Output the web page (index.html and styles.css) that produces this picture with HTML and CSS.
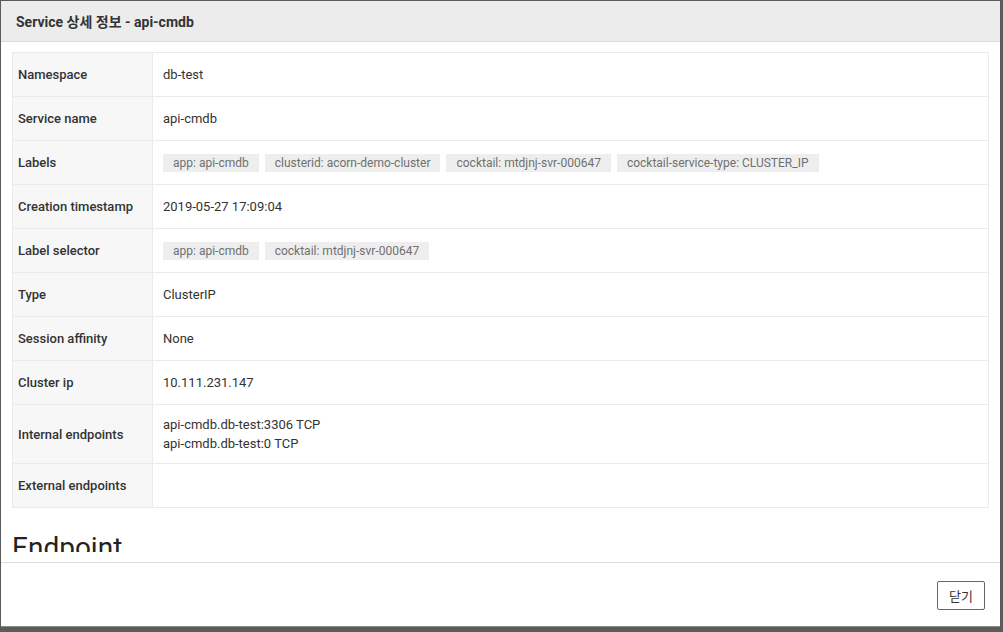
FILE: index.html
```html
<!DOCTYPE html>
<html lang="ko">
<head>
<meta charset="utf-8">
<title>Service 상세 정보</title>
<link rel="stylesheet" href="styles.css">
</head>
<body>
<div class="backdrop">
  <div class="modal">
    <div class="modal-header">Service 상세 정보 - api-cmdb</div>
    <div class="modal-body">
      <div class="scroll">
        <table class="detail">
          <tr><th>Namespace</th><td>db-test</td></tr>
          <tr><th>Service name</th><td>api-cmdb</td></tr>
          <tr><th>Labels</th><td>
            <span class="tag">app: api-cmdb</span><span class="tag">clusterid: acorn-demo-cluster</span><span class="tag">cocktail: mtdjnj-svr-000647</span><span class="tag">cocktail-service-type: CLUSTER_IP</span>
          </td></tr>
          <tr><th>Creation timestamp</th><td>2019-05-27 17:09:04</td></tr>
          <tr><th>Label selector</th><td>
            <span class="tag">app: api-cmdb</span><span class="tag">cocktail: mtdjnj-svr-000647</span>
          </td></tr>
          <tr><th>Type</th><td>ClusterIP</td></tr>
          <tr><th>Session affinity</th><td>None</td></tr>
          <tr><th>Cluster ip</th><td>10.111.231.147</td></tr>
          <tr><th>Internal endpoints</th><td>api-cmdb.db-test:3306 TCP<br>api-cmdb.db-test:0 TCP</td></tr>
          <tr><th>External endpoints</th><td></td></tr>
        </table>
        <h2 class="section-title">Endpoint</h2>
      </div>
    </div>
    <div class="modal-footer">
      <button class="btn">닫기</button>
    </div>
  </div>
</div>
</body>
</html>
```
FILE: styles.css
```css
html, body {
  margin: 0;
  padding: 0;
}
body {
  background: #5b5b5b;
  font-family: Roboto, "Noto Sans CJK KR", sans-serif;
  color: #333;
  font-size: 13px;
}
.backdrop {
  width: 1003px;
  height: 632px;
  padding: 1px 0 0 1px;
  box-sizing: border-box;
}
.modal {
  width: 999px;
  height: 625px;
  background: #fff;
  display: flex;
  flex-direction: column;
  box-shadow: 0 1px 0 #8a8a8a;
}
.modal-header {
  height: 40px;
  flex: none;
  background: #ececec;
  border-bottom: 1px solid #dcdcdc;
  padding: 0 15px;
  display: flex;
  align-items: center;
  font-weight: 700;
  font-size: 14px;
  color: #333;
}
.modal-body {
  flex: none;
  padding: 10px 11px;
  box-sizing: border-box;
  height: 520px;
}
.scroll {
  height: 500px;
  overflow: hidden;
}
.detail {
  width: 977px;
  border-collapse: collapse;
  border: 1px solid #ebebeb;
}
.detail tr {
  height: 44px;
}
.detail th,
.detail td {
  border: 1px solid #ebebeb;
  padding: 10px 10px;
  line-height: 19px;
  vertical-align: middle;
  text-align: left;
}
.detail th {
  width: 124px;
  background: #f7f7f7;
  font-weight: 500;
  padding-left: 5px;
  color: #333;
}
.detail td {
  color: #333;
}
.tag {
  display: inline-block;
  background: #eeeeee;
  color: #707070;
  font-size: 12px;
  line-height: 18px;
  padding: 0 10px;
  margin-right: 6px;
  vertical-align: middle;
}
.section-title {
  font-size: 28px;
  font-weight: 400;
  line-height: 1.1;
  margin: 25px 0 0 0;
  color: #222;
}
.modal-footer {
  flex: 1;
  border-top: 1px solid #dcdcdc;
  display: flex;
  justify-content: flex-end;
  align-items: flex-start;
  padding: 18px 15px 0 0;
}
.btn {
  width: 48px;
  height: 29px;
  background: #fff;
  border: 1px solid #666;
  border-radius: 2px;
  font-family: "Noto Sans CJK KR", Roboto, sans-serif;
  font-size: 13px;
  color: #333;
  padding: 0;
}
```
